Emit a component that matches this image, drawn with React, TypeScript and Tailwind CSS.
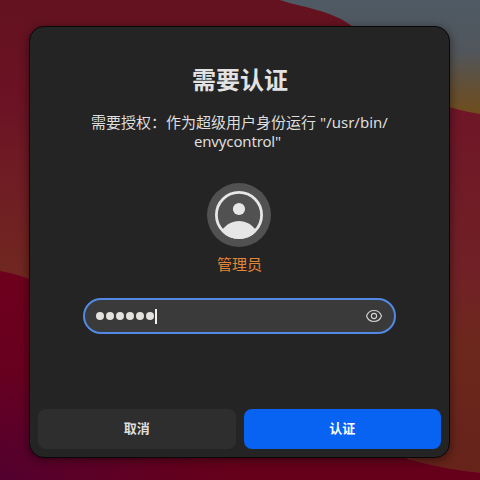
function Wallpaper() {
  return (
    <svg className="absolute inset-0 h-full w-full" viewBox="0 0 480 480" aria-hidden="true">
      <defs>
        <linearGradient id="sky" x1="0" y1="0" x2="0" y2="115" gradientUnits="userSpaceOnUse">
          <stop offset="0" stopColor="#4e5a64" />
          <stop offset="0.45" stopColor="#51565c" />
          <stop offset="0.75" stopColor="#624f35" />
          <stop offset="1" stopColor="#704d1d" />
        </linearGradient>
        <linearGradient id="dune" x1="0" y1="0" x2="0" y2="280" gradientUnits="userSpaceOnUse">
          <stop offset="0" stopColor="#64121f" />
          <stop offset="0.35" stopColor="#6b1224" />
          <stop offset="0.6" stopColor="#6f1b24" />
          <stop offset="1" stopColor="#712820" />
        </linearGradient>
        <linearGradient id="slope" x1="0" y1="105" x2="0" y2="475" gradientUnits="userSpaceOnUse">
          <stop offset="0" stopColor="#6f1527" />
          <stop offset="0.45" stopColor="#712126" />
          <stop offset="0.65" stopColor="#6d281d" />
          <stop offset="1" stopColor="#66231a" />
        </linearGradient>
        <linearGradient id="valley" x1="60" y1="270" x2="20" y2="480" gradientUnits="userSpaceOnUse">
          <stop offset="0" stopColor="#6e001c" />
          <stop offset="0.5" stopColor="#680020" />
          <stop offset="1" stopColor="#52002f" />
        </linearGradient>
        <linearGradient id="floor" x1="0" y1="0" x2="240" y2="0" gradientUnits="userSpaceOnUse">
          <stop offset="0" stopColor="#66001e" stopOpacity="0" />
          <stop offset="1" stopColor="#66001a" />
        </linearGradient>
      </defs>
      <rect width="480" height="480" fill="url(#sky)" />
      <path d="M0 0H280C300 7 331 10 352 26L450 107V480H0Z" fill="url(#dune)" />
      <path d="M440 104Q460 111 480 114V480H410Z" fill="url(#slope)" />
      <path d="M0 271Q18 274 34 281L410 460Q446 470 480 473V480H0Z" fill="url(#valley)" />
      <path d="M0 458H402Q446 470 480 473V480H0Z" fill="url(#floor)" />
    </svg>
  );
}

function Avatar() {
  return (
    <svg className="size-16" viewBox="0 0 64 64" aria-hidden="true">
      <defs>
        <clipPath id="face">
          <circle cx="32" cy="32" r="24" />
        </clipPath>
      </defs>
      <circle cx="32" cy="32" r="32" fill="#515151" />
      <circle cx="32" cy="32" r="22.6" fill="none" stroke="#e6e6e6" strokeWidth="2.8" />
      <circle cx="32" cy="26" r="6.1" fill="#e6e6e6" />
      <path d="M15 47.5C19 41.5 25 38 32 38S45 41.5 49 47.5L45 58H19Z" fill="#e6e6e6" clipPath="url(#face)" />
    </svg>
  );
}

function EyeIcon() {
  return (
    <svg className="h-4 w-4 overflow-visible" viewBox="0 0 16 16" fill="none" stroke="#d2d2d2" strokeWidth="1.1" aria-hidden="true">
      <path d="M.5 8C1.8 4.4 4.5 2.5 8 2.5S14.2 4.4 15.5 8C14.2 11.6 11.5 13.5 8 13.5S1.8 11.6.5 8Z" />
      <circle cx="8" cy="8" r="2.6" />
    </svg>
  );
}

export default function App() {
  return (
    <main className="relative flex h-[480px] w-[480px] overflow-hidden pt-[26px] pl-[29px] font-['Noto_Sans','Noto_Sans_CJK_SC',sans-serif]">
      <Wallpaper />
      <section
        role="dialog"
        aria-labelledby="title"
        className="relative flex h-[432px] w-[421px] flex-col items-center rounded-[15px] border border-[#080808] bg-[#242424] px-2 pt-[35px] pb-2 text-[#dedede] shadow-[0_2px_8px_1px_rgba(0,0,0,0.4)]"
      >
        <h1 id="title" className="pl-px text-2xl leading-9 font-bold text-[#e2e2e2]">
          需要认证
        </h1>
        <p className="mt-[15px] text-center text-[15px] leading-[19px]">
          需要授权：作为超级用户身份运行 "/usr/bin/
          <br />
          <span className="pr-1 tracking-[-0.15px]">envycontrol"</span>
        </p>
        <div className="mt-[32px] flex flex-col items-center pr-0.5">
          <Avatar />
        </div>
        <p className="mt-[5px] text-[15px] leading-6 text-[#e48638]">管理员</p>
        <div className="mt-[22px] flex h-9 w-[313px] shrink-0 items-center rounded-full border-2 border-[#5289e4] bg-[#3a3a3a] pr-3 pl-[11px]">
          <div className="flex items-center gap-[2.5px]" aria-label="••••••">
            {[0, 1, 2, 3, 4, 5].map((i) => (
              <span key={i} className="size-[7.5px] rounded-full bg-[#e4e2df]" />
            ))}
          </div>
          <span className="ml-[1.5px] h-[15px] w-[2px] bg-[#f0f0f0]" />
          <button className="ml-auto" aria-label="显示密码">
            <EyeIcon />
          </button>
        </div>
        <div className="mt-auto flex h-10 w-full gap-2 text-[13px] font-bold">
          <button className="flex-1 rounded-lg bg-[#2e2e2e]">取消</button>
          <button className="flex-1 rounded-lg bg-[#0862f2] text-white">认证</button>
        </div>
      </section>
    </main>
  );
}
